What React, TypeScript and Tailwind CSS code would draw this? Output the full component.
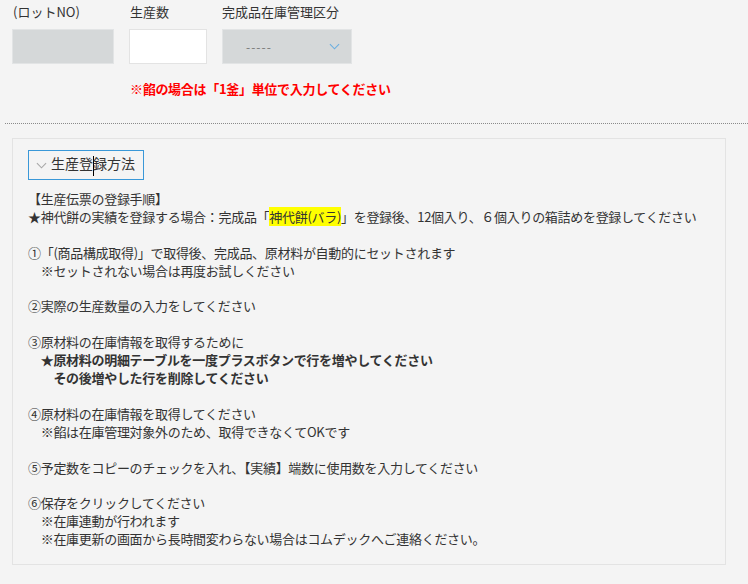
const Chevron = ({ className }: { className: string }) => (
  <svg viewBox="0 0 12 7" className={className} fill="none" stroke="currentColor" strokeWidth="1.2">
    <polyline points="1,1 6,6 11,1" />
  </svg>
);

const App = () => {
  return (
    <div className="min-h-[584px] w-[748px] bg-[#f4f4f4] text-[#333] text-[13px] font-['Meiryo','Noto_Sans_CJK_JP',sans-serif] overflow-hidden">
      <div className="pl-3 pt-[3px]">
        <div className="flex gap-[15px]">
          <div className="w-[102px] flex flex-col">
            <span className="pl-px leading-[18px]">(ロットNO)</span>
            <div className="mt-[8px] h-[35px] bg-[#d5d8d9] border border-[#e2e4e5]" />
          </div>
          <div className="w-[78px] flex flex-col">
            <span className="pl-px leading-[18px]">生産数</span>
            <div className="mt-[8px] h-[35px] bg-white border border-[#e3e3e3]" />
          </div>
          <div className="w-[130px] flex flex-col">
            <span className="leading-[18px]">完成品在庫管理区分</span>
            <div className="mt-[8px] h-[35px] bg-[#d5d8d9] border border-[#e2e4e5] flex items-center justify-between pl-[23px] pr-[11px]">
              <span className="text-[#777] tracking-[1px] text-[12px]">-----</span>
              <Chevron className="w-[11px] h-[7px] text-[#6aaee0]" />
            </div>
          </div>
        </div>
        <div className="ml-[118px] mt-[16px] text-[#ff0000] font-bold leading-[18px] tracking-[-0.3px]">
          ※餡の場合は「1釜」単位で入力してください
        </div>
      </div>

      <div className="ml-[5px] mt-[25px] border-t border-dotted border-[#8a8a8a]" />

      <div className="ml-3 mt-[14px] w-[714px] h-[427px] border border-[#e3e3e3] pt-[11px] px-[15px]">
        <button className="h-[30px] w-[116px] border border-[#3a98d8] flex items-center pl-[7px] gap-[4px] text-[14px] text-[#333]">
          <Chevron className="w-[11px] h-[7px] text-[#a8a8a8]" />
          <span className="leading-[18px]">
            生産登<span className="inline-block w-px h-[20px] bg-black align-middle -mr-px" />録方法
          </span>
        </button>

        <div className="mt-[10px] leading-[17.9px] whitespace-pre tracking-[-0.3px]">
          <div>【生産伝票の登録手順】</div>
          <div>
            ★神代餅の実績を登録する場合：完成品「
            <span className="bg-[#ffff00]">神代餅(バラ)</span>
            」を登録後、12個入り、６個入りの箱詰めを登録してください
          </div>
          <div>&nbsp;</div>
          <div>①「(商品構成取得)」で取得後、完成品、原材料が自動的にセットされます</div>
          <div>　※セットされない場合は再度お試しください</div>
          <div>&nbsp;</div>
          <div>②実際の生産数量の入力をしてください</div>
          <div>&nbsp;</div>
          <div>③原材料の在庫情報を取得するために</div>
          <div className="font-bold">　★原材料の明細テーブルを一度プラスボタンで行を増やしてください</div>
          <div className="font-bold">　　その後増やした行を削除してください</div>
          <div>&nbsp;</div>
          <div>④原材料の在庫情報を取得してください</div>
          <div>　※餡は在庫管理対象外のため、取得できなくてOKです</div>
          <div>&nbsp;</div>
          <div>⑤予定数をコピーのチェックを入れ、【実績】端数に使用数を入力してください</div>
          <div>&nbsp;</div>
          <div>⑥保存をクリックしてください</div>
          <div>　※在庫連動が行われます</div>
          <div>　※在庫更新の画面から長時間変わらない場合はコムデックへご連絡ください。</div>
        </div>
      </div>
    </div>
  );
};

export default App;
